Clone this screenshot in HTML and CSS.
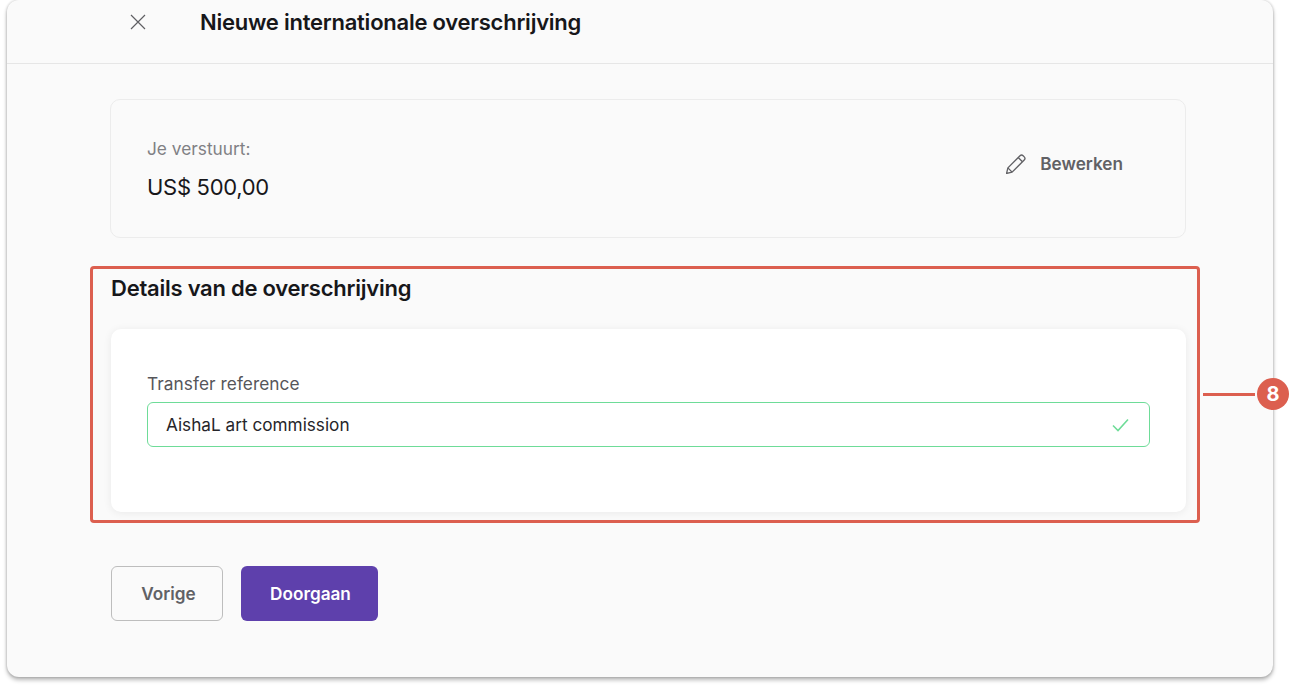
FILE: index.html
```html
<!DOCTYPE html>
<html lang="nl">
<head>
<meta charset="utf-8">
<title>Nieuwe internationale overschrijving</title>
<link rel="stylesheet" href="styles.css">
</head>
<body>
<main class="panel">
  <header class="topbar">
    <svg class="close" width="18" height="18" viewBox="0 0 18 18" fill="none" stroke="#5f5f63" stroke-width="1.2"><path d="M2 2l14 14M16 2L2 16"/></svg>
    <h1 class="title">Nieuwe internationale overschrijving</h1>
  </header>
  <div class="content">
    <section class="summary">
      <div class="summary-text">
        <div class="summary-label">Je verstuurt:</div>
        <div class="summary-amount">US$ 500,00</div>
      </div>
      <div class="edit">
        <svg width="20" height="20" viewBox="1 1 18 18" fill="none" stroke="#616165" stroke-width="1.2" stroke-linejoin="round"><path d="M1.5 18.5l1.2-5L13.6 2.6a2 2 0 0 1 2.8 0l1 1a2 2 0 0 1 0 2.8L6.5 17.3z"/><path d="M12 4.2l3.8 3.8M2.7 13.5l3.8 3.8"/></svg>
        <span>Bewerken</span>
      </div>
    </section>
    <section class="details">
      <h2 class="details-title">Details van de overschrijving</h2>
      <div class="form-card">
        <label class="field-label">Transfer reference</label>
        <div class="input">
          <span>AishaL art commission</span>
          <svg width="17" height="14" viewBox="0 0 17 14" fill="none" stroke="#6edc98" stroke-width="1.6"><path d="M1 7.5l5 5L16 1.5"/></svg>
        </div>
      </div>
      <div class="highlight"></div>
      <div class="callout"><span class="callout-line"></span><span class="badge">8</span></div>
    </section>
    <div class="actions">
      <button class="btn btn-back">Vorige</button>
      <button class="btn btn-next">Doorgaan</button>
    </div>
  </div>
</main>
</body>
</html>
```
FILE: styles.css
```css
* { box-sizing: border-box; }
html, body { margin: 0; height: 100%; background: #fff; overflow: hidden; }
body { font-family: Inter, "Liberation Sans", sans-serif; color: #17171a; }
.panel {
  margin-left: 7px;
  width: 1266px;
  height: 677px;
  background: #fafafa;
  border-radius: 12px;
  box-shadow: 0 0 2px 1px rgba(0,0,0,.1), 0 3px 4px rgba(0,0,0,.28);
}
.topbar {
  height: 64px;
  padding: 0 0 19px 122px;
  display: flex;
  align-items: center;
  border-bottom: 1px solid #e6e6e6;
}
.close { flex: none; margin-right: 53px; }
.title { margin: 0; font-size: 22px; line-height: 28px; font-weight: 600; letter-spacing: -0.24px; }
.content { padding: 35px 87px 0 104px; }
.summary {
  height: 139px;
  margin-left: -1px;
  border: 1px solid #ececec;
  border-radius: 10px;
  padding: 0 62px 0 36px;
  display: flex;
  align-items: center;
  justify-content: space-between;
}
.summary-label { margin-top: 1px; font-size: 17.3px; line-height: 22px; color: #808084; }
.summary-amount { margin-top: 14px; font-size: 22px; line-height: 26px; letter-spacing: -0.3px; }
.edit { display: flex; align-items: center; gap: 14px; margin-bottom: 10px; font-size: 17.2px; font-weight: 600; color: #616165; }
.details { position: relative; margin-top: 36px; }
.details-title { margin: 0; font-size: 22px; line-height: 28px; font-weight: 600; letter-spacing: -0.24px; }
.form-card {
  margin-top: 27px;
  height: 183px;
  padding: 45px 36px 0;
  background: #fff;
  border-radius: 10px;
  box-shadow: 0 1px 8px rgba(0,0,0,.07);
}
.field-label { display: block; font-size: 17.3px; line-height: 20px; letter-spacing: 0.05px; color: #56565a; }
.input {
  margin-top: 8px;
  height: 45px;
  padding: 0 20px 0 18px;
  display: flex;
  align-items: center;
  justify-content: space-between;
  border: 1px solid #6edc98;
  border-radius: 6px;
  font-size: 17.2px;
  color: #26262a;
}
.highlight {
  position: absolute;
  left: -21px;
  right: -14px;
  top: -8px;
  height: 257px;
  border: 3px solid #dc5f4f;
  border-radius: 4px;
  pointer-events: none;
}
.callout {
  position: absolute;
  left: 1092px;
  top: 104px;
  display: flex;
  align-items: center;
  gap: 2px;
}
.callout-line { width: 52px; height: 3px; background: #dc5f4f; }
.badge {
  width: 32px;
  height: 32px;
  border-radius: 50%;
  background: #dc5f4f;
  color: #fff;
  font-size: 20px;
  font-weight: 700;
  display: flex;
  align-items: center;
  justify-content: center;
}
.actions { margin-top: 54px; display: flex; gap: 18px; }
.btn {
  height: 55px;
  border-radius: 6px;
  font-family: inherit;
  font-size: 17.2px;
  font-weight: 600;
}
.btn-back { width: 112px; padding-left: 9px; background: transparent; border: 1px solid #bdbdbd; color: #616165; }
.btn-next { width: 137px; padding-left: 8px; background: #5e40ac; border: 0; color: #fff; }
```
